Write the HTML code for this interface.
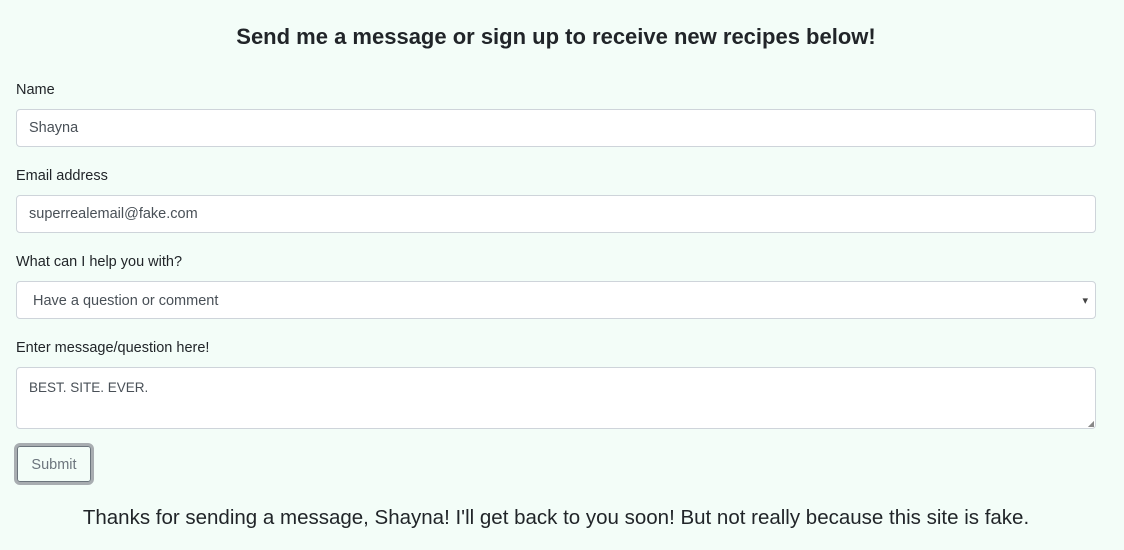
<!DOCTYPE html>
<html><head><meta charset="utf-8"><style>
body{margin:0;width:1124px;height:550px;background:#f3fdf8;font-family:"Liberation Sans",sans-serif;color:#212529;position:relative;overflow:hidden}
.a{position:absolute}
h1{position:absolute;top:24px;left:0;width:1112px;text-align:center;margin:0;font-size:22px;font-weight:bold}
.l{position:absolute;left:16px;font-size:14.5px}
.f{position:absolute;left:16px;width:1080px;background:#fff;border:1px solid #ced4da;border-radius:4px;font-size:14.5px;color:#495057;box-sizing:border-box;padding-left:12px}
</style></head><body>
<h1>Send me a message or sign up to receive new recipes below!</h1>
<div class="l" style="top:82px">Name</div>
<div class="f" style="top:109px;height:38px;line-height:36px">Shayna</div>
<div class="l" style="top:168px">Email address</div>
<div class="f" style="top:195px;height:38px;line-height:36px">superrealemail@fake.com</div>
<div class="l" style="top:254px">What can I help you with?</div>
<div class="f" style="top:281px;height:38px;line-height:38px;padding-left:16px">Have a question or comment<span class="a" style="right:7px;top:0;font-size:11px;color:#444">▾</span></div>
<div class="l" style="top:340px">Enter message/question here!</div>
<div class="f" style="top:367px;height:62px;padding-top:12px;font-size:13.5px">BEST. SITE. EVER.<span class="a" style="right:1px;bottom:0;font-size:8px;color:#888">◢</span></div>
<div class="a" style="left:14px;top:443px;width:80px;height:42px;border:3px solid #a8adb1;border-radius:6px;box-sizing:border-box"><div style="position:absolute;inset:0;border:1px solid #6c757d;border-radius:3px;text-align:center;line-height:37px;font-size:14.5px;color:#6c757d">Submit</div></div>
<div class="a" style="top:506px;left:0;width:1112px;text-align:center;font-size:20.5px">Thanks for sending a message, Shayna! I'll get back to you soon! But not really because this site is fake.</div>
</body></html>
